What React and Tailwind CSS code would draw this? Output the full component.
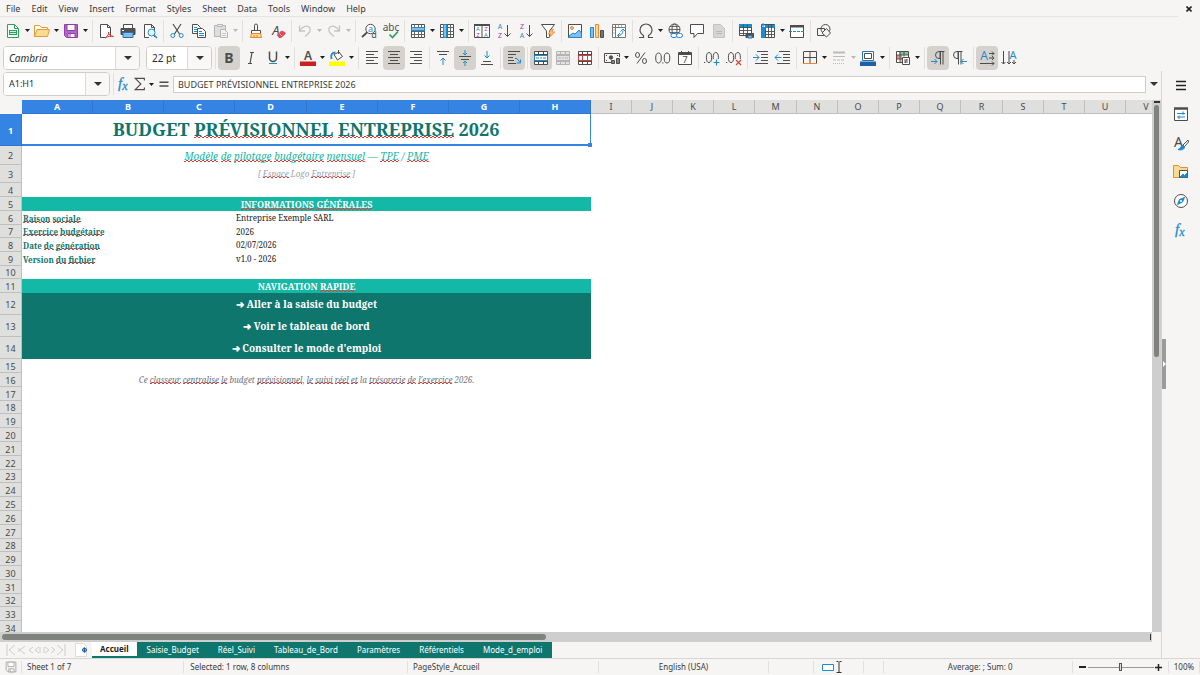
import React from "react";
import clsx from "clsx";

const menus = ["File", "Edit", "View", "Insert", "Format", "Styles", "Sheet", "Data", "Tools", "Window", "Help"];

const columns = [
  ["A", 71], ["B", 71], ["C", 71], ["D", 72], ["E", 71], ["F", 71], ["G", 71], ["H", 71],
  ["I", 41], ["J", 41], ["K", 41], ["L", 41], ["M", 42], ["N", 41], ["O", 41], ["P", 41],
  ["Q", 41], ["R", 42], ["S", 41], ["T", 41], ["U", 41], ["V", 41],
];

const rowHeights = [
  32, 19, 18, 14, 14, 14, 13, 14, 14, 13, 14, 22, 22, 22, 14, 14, 14, 13, 14,
  14, 14, 14, 13, 14, 14, 14, 14, 13, 14, 14, 14, 13, 14, 14,
];

const tabs = ["Saisie_Budget", "Réel_Suivi", "Tableau_de_Bord", "Paramètres", "Référentiels", "Mode_d_emploi"];

/* ---------- helpers ---------- */

const Svg = ({ children, className = "w-4 h-4" }) => (
  <svg viewBox="0 0 16 16" fill="none" stroke="#4d4d4d" strokeWidth="1" className={clsx("shrink-0 overflow-visible", className)} aria-hidden="true">
    {children}
  </svg>
);

const Glyph = ({ x = 8, y = 13, size = 14, fill = "#4d4d4d", children, ...rest }) => (
  <text x={x} y={y} fontSize={size} fill={fill} stroke="none" textAnchor="middle" fontFamily="Noto Sans, sans-serif" {...rest}>
    {children}
  </text>
);

const Tool = ({ label, active, children }) => (
  <button
    type="button"
    aria-label={label}
    className={clsx("flex h-6 w-[22px] shrink-0 items-center justify-center rounded", active && "bg-[#d5d1cd]")}
  >
    {children}
  </button>
);

const Caret = ({ label = "More", dim }) => (
  <button type="button" aria-label={label} className="flex h-6 w-[7px] shrink-0 items-center justify-center">
    <svg viewBox="0 0 5 3" className="h-[3px] w-[5px]" aria-hidden="true">
      <path d="M0 0h5L2.500 3z" fill={dim ? "#b9b9b9" : "#1f1f1f"} />
    </svg>
  </button>
);

const Sep = ({ wide }) => (
  <span className={clsx("flex h-[22px] shrink-0 justify-center", wide ? "w-1.5" : "w-[5px]")}>
    <span className="w-px bg-[#e2e0de]" />
  </span>
);

const Combo = ({ label, value, className, inputClass = "text-[9px]" }) => (
  <div className={clsx("flex h-6 shrink-0 overflow-hidden rounded border border-[#d0ccc8] bg-white", className)}>
    <input aria-label={label} defaultValue={value} className={clsx("min-w-0 flex-1 bg-white pl-[5px] text-[#2b2b2b] outline-none", inputClass)} />
    <button type="button" aria-label={`${label} list`} className="flex w-6 shrink-0 items-center justify-center border-l border-[#dcd9d6] bg-[#f9f8f7]">
      <svg viewBox="0 0 8 4" className="h-1 w-2" aria-hidden="true">
        <path d="M0 0h8L4 4z" fill="#2e3436" />
      </svg>
    </button>
  </div>
);

/* Words flagged by the spell checker */
const Sp = ({ big, children }) => (
  <span
    className={clsx(
      "bg-[linear-gradient(90deg,#e0403a_2px,transparent_2px),linear-gradient(90deg,#e0403a_2px,transparent_2px)] [background-repeat:repeat-x] [background-size:4px_1px]",
      big
        ? "[background-position:0_calc(100%-3px),2px_calc(100%-4px)]"
        : "[background-position:0_calc(100%-1px),2px_calc(100%-2px)]"
    )}
  >
    {children}
  </span>
);

/* ---------- icons ---------- */

const blue = "#1e8bcd";
const light = "#83beec";

const NewIcon = () => (
  <Svg>
    <path d="M2.500 1.500h7l4 4v9h-11z" fill="#fff" stroke="#2aa05a" />
    <path d="M9.500 1.500v4h4" stroke="#2aa05a" />
    <path d="M4 7h8v5H4z" fill="#2aa05a" stroke="none" />
    <path d="M5 8.500h6M5 10.500h6" stroke="#d4f0dd" />
  </Svg>
);
const OpenIcon = () => (
  <Svg>
    <path d="M.5 13.500v-11h5l2 2h6v2" fill="#fff" stroke="#e69b3a" />
    <path d="M.5 13.500l2.500-7h12.500l-2 7z" fill="#f8db8f" stroke="#e69b3a" />
  </Svg>
);
const SaveIcon = ({ dim }) => (
  <Svg className={dim ? "h-3 w-3" : "h-4 w-4"}>
    <path d="M1.500 1.500h13v13h-11l-2-2z" fill={dim ? "#f5f4f2" : "#b565c8"} stroke={dim ? "#999" : "#8f3fa6"} />
    <path d="M4 1.500h8v6H4z" fill="#fff" stroke={dim ? "#999" : "#8f3fa6"} />
    <path d="M5 10.500h7v4H5z" fill="#fff" stroke={dim ? "#999" : "#8f3fa6"} />
    <path d="M7 11v3" stroke={dim ? "#999" : "#8f3fa6"} />
  </Svg>
);
const PdfIcon = () => (
  <Svg>
    <path d="M8 14.500H2.500v-13h7l3 3V14" fill="#fff" />
    <path d="M9.500 1.500v3h3" />
    <path d="M7 15c3-2 4-4 3.500-6 0 3 2 4 5 4.500-3-1-6 0-8.500 1.500z" stroke="#dd3b3b" />
  </Svg>
);
const PrintIcon = () => (
  <Svg>
    <path d="M3.500 5V1.500h9V5" fill="#fff" />
    <path d="M1 5.500h14v6H1z" fill="#4d5357" />
    <path d="M3 9.500h10v5H3z" fill={light} stroke="#2a74ae" />
    <path d="M2 7.500h2" stroke="#fff" />
  </Svg>
);
const PreviewIcon = () => (
  <Svg>
    <path d="M7 14.500H2.500v-13h7l3 3V14" fill="#fff" />
    <path d="M9.500 1.500v3h3" />
    <circle cx="9.500" cy="9.500" r="3.500" fill="#e7f3fb" stroke={blue} />
    <path d="M12 12l3 3" stroke={blue} strokeWidth="1.500" />
  </Svg>
);
const CutIcon = () => (
  <Svg>
    <path d="M4 1l6.500 10M12 1L5.500 11" strokeWidth="1.200" />
    <circle cx="3.800" cy="12.500" r="2" stroke={blue} />
    <circle cx="12.200" cy="12.500" r="2" stroke={blue} />
  </Svg>
);
const CopyIcon = () => (
  <Svg>
    <path d="M1.500 1.500h5l3 3v6h-8z" fill="#fff" />
    <path d="M3 4.500h3M3 6.500h4M3 8.500h3" stroke={blue} />
    <path d="M6.500 5.500h5l3 3v6h-8z" fill="#fff" />
    <path d="M8 8.500h3M8 10.500h5M8 12.500h5" stroke={blue} />
  </Svg>
);
const PasteIcon = () => (
  <Svg>
    <path d="M1.500 2.500h11v11h-11z" fill="#dedede" stroke="#b5b5b5" />
    <path d="M4.500 1.500h5v2h-5z" fill="#eee" stroke="#b5b5b5" />
    <path d="M7.500 6.500h4l3 3v5h-7z" fill="#f2f2f2" stroke="#b5b5b5" />
    <path d="M9 10.500h4M9 12.500h4" stroke="#c8c8c8" />
  </Svg>
);
const BrushIcon = () => (
  <Svg>
    <path d="M6.500 7.500v-5a1.500 1.500 0 013 0v5" />
    <path d="M3.500 7.500h9v3h-9z" fill="#fff" />
    <path d="M3.500 10.500l-1 4h11l-1-4z" fill="#f8db8f" stroke="#ed8733" />
    <path d="M6 14v-2M9 14v-2" stroke="#ed8733" />
  </Svg>
);
const ClearIcon = () => (
  <Svg>
    <Glyph x={6} y={12} size={13} fontStyle="italic">A</Glyph>
    <path d="M7.500 12l4-4 3.500 1.500v1.500L11 14.500H9z" fill="#e04b57" stroke="#e04b57" strokeLinejoin="round" />
    <path d="M9.500 10.500l3 3" stroke="#f9b5b9" />
  </Svg>
);
const UndoIcon = ({ flip }) => (
  <Svg>
    <g transform={flip ? "matrix(-1 0 0 1 16 0)" : undefined} stroke="#c4c4c4">
      <path d="M2.500 2.500v5.500h5.500M2.500 8c3-5 8-6 10-3.500S13 10 8 13.500" strokeWidth="1.300" />
    </g>
  </Svg>
);
const FindIcon = () => (
  <Svg>
    <circle cx="9.500" cy="6" r="4.700" fill="#fff" />
    <path d="M6 9.500L1 14" strokeWidth="1.800" />
    <Glyph x={9.500} y={9} size={9} fill={blue}>a</Glyph>
    <Glyph x={13} y={15} size={9}>d</Glyph>
  </Svg>
);
const SpellIcon = () => (
  <Svg>
    <Glyph x={8} y={8} size={10}>abc</Glyph>
    <path d="M6.500 11.500l3 3 5.500-6" stroke="#23a15a" strokeWidth="1.600" />
  </Svg>
);
const GridIcon = ({ mode }) => (
  <Svg>
    <path d="M1.500 1.500h13v13h-13z" fill="#fff" />
    <path d="M1.500 4.500h13M1.500 8.500h13M1.500 11.500h13M4.500 1.500v13M8.500 1.500v13M11.500 1.500v13" stroke="#666" />
    {mode === "row" ? <path d="M1.500 4.500h13v3h-13z" fill={light} stroke={blue} /> : <path d="M4.500 1.500h3v13h-3z" fill={light} stroke={blue} />}
  </Svg>
);
const SortIcon = () => (
  <Svg>
    <path d="M.5 1.500h15v13H.5zM8 3v12" fill="#fff" />
    <path d="M0 2h16" strokeWidth="2" />
    <Glyph x={4} y={8} size={6} fill={blue}>A</Glyph>
    <Glyph x={4} y={14} size={6} fill="#a03ab3">Z</Glyph>
    <Glyph x={12} y={8} size={6} fill="#a03ab3">Z</Glyph>
    <Glyph x={12} y={14} size={6} fill={blue}>A</Glyph>
  </Svg>
);
const SortDirIcon = ({ top, bottom }) => (
  <Svg>
    <Glyph x={4} y={6} size={7} fill={top === "A" ? blue : "#a03ab3"}>{top}</Glyph>
    <Glyph x={4} y={15} size={7} fill={top === "A" ? "#a03ab3" : blue}>{bottom}</Glyph>
    <path d="M11.500 2v11.500M8.500 10.500l3 3 3-3" />
  </Svg>
);
const FilterIcon = () => (
  <Svg>
    <path d="M1.500 1.500h13L9.500 8v6.500h-3V8z" fill="#fff" />
    <path d="M12 6L8 11h3l-2 4 6-6h-3l1.500-3z" fill="#f8c67a" stroke="#ed8733" strokeWidth=".7" />
  </Svg>
);
const ImageIcon = () => (
  <Svg>
    <path d="M1.500 1.500h13v13h-13z" fill="#fff" />
    <circle cx="5" cy="5" r="1.500" fill="#f8c67a" stroke="#ed8733" />
    <path d="M2 13l4-3 2 1 4-4 2.500 3v4.500H2z" fill={light} stroke={blue} />
  </Svg>
);
const ChartIcon = () => (
  <Svg>
    <path d="M1.500 4.500h3v10h-3z" fill={light} stroke={blue} />
    <path d="M6.500 1.500h3v13h-3z" fill="#f8db8f" stroke="#ed8733" />
    <path d="M11.500 7.500h3v7h-3z" fill="#777" />
  </Svg>
);
const PivotIcon = () => (
  <Svg>
    <path d="M1.500 1.500h13v13h-13zM1.500 4.500h13M4.500 1.500v13" fill="#fff" stroke="#777" />
    <path d="M7 12.500c3 0 5-2 5-5M9.500 8.500L12 6l2.500 2.500M9 10l-2.500 2.500L9 15" stroke={blue} />
    <path d="M2.500 7h1M2.500 10h1M7 3h1M10 3h1" stroke="#777" />
  </Svg>
);
const OmegaIcon = () => (
  <Svg>
    <path d="M1 14.500h4.500v-2C3 11 2 9.500 2 7a6 6 0 0112 0c0 2.500-1 4-3.500 5.500v2H15" strokeWidth="1.200" />
  </Svg>
);
const LinkIcon = () => (
  <Svg>
    <circle cx="7.500" cy="6.500" r="5.500" />
    <ellipse cx="7.500" cy="6.500" rx="2.500" ry="5.500" />
    <path d="M2 6.500h11M3 3.500h9M3 9.500h9" strokeWidth=".8" />
    <rect x="4" y="10.500" width="6" height="4" rx="2" fill="#fff" stroke={blue} />
    <rect x="9.500" y="10.500" width="6" height="4" rx="2" fill="#fff" stroke={blue} />
  </Svg>
);
const CommentIcon = () => (
  <Svg>
    <path d="M1.500 1.500h13v9h-6l-3.500 4v-4H1.500z" fill="#fff" />
  </Svg>
);
const HeaderFooterIcon = () => (
  <Svg>
    <path d="M2.500 1.500h7l4 4v9h-11z" fill="#d6d6d6" stroke="#c2c2c2" />
    <path d="M5 8.500h6M5 10.500h6" stroke="#b8b8b8" />
  </Svg>
);
const PrintAreaIcon = () => (
  <Svg>
    <path d="M1.500 1.500h12v11h-12z" fill="#fff" />
    <path d="M1 1h13v4H1z" fill={blue} stroke="none" />
    <path d="M1.500 4.500h12M1.500 7.500h12M1.500 10.500h12M5.500 1.500v11M9.500 1.500v11" strokeWidth=".9" />
    <path d="M8 10.500h7.500v4H8z" fill="#4d5357" />
    <path d="M10 12.500h4v2.500h-4z" fill={light} stroke="#2a74ae" />
  </Svg>
);
const FreezeIcon = () => (
  <Svg>
    <path d="M1.500 1.500h13v13h-13z" fill="#fff" />
    <path d="M1 4h4.500v11H1zM5 4V2h10v3H5z" fill={blue} stroke="none" />
    <path d="M5.500 5v9.500M8.500 2v12.500M11.500 2v12.500M5 8.500h10M5 11.500h10" strokeWidth=".9" />
    <path d="M3 0v4M1 2h4" stroke={blue} />
  </Svg>
);
const SplitIcon = () => (
  <Svg>
    <path d="M1.500 2.500h13v12h-13z" fill="#fff" />
    <path d="M1 2h14v2.500H1z" fill="#4d4d4d" stroke="none" />
    <path d="M0 8.500h16" stroke={blue} strokeDasharray="3 1" />
  </Svg>
);
const ShapesIcon = () => (
  <Svg>
    <circle cx="9.500" cy="6" r="4.500" />
    <path d="M1.500 5.500h7v7h-7z" />
    <path d="M10.500 5.500l4 4.500-4 4-4.500-4z" fill="#f5f4f2" />
  </Svg>
);
const ItalicIcon = () => (
  <Svg>
    <path d="M7 2.500h4M5 13.500h4M9 2.500l-2 11" strokeWidth="1.200" />
  </Svg>
);
const UnderlineIcon = () => (
  <Svg>
    <path d="M4.500 1.500V8a3.500 3.500 0 007 0V1.500" strokeWidth="1.500" />
    <path d="M4 13.500h8" stroke={blue} />
  </Svg>
);
const FontColor = () => (
  <Svg>
    <Glyph x={8} y={10} size={12} fontWeight="600">A</Glyph>
    <path d="M0 11.500h16V16H0z" fill="#c9211e" stroke="none" />
  </Svg>
);
const FillColor = () => (
  <Svg>
    <path d="M5 4.500l5-2.500 3.500 4.500-5 3.500z" fill="#fff" />
    <path d="M2.500 9C1.500 4.500 3 2.500 6.500 2.500" stroke={blue} strokeWidth="1.800" />
    <path d="M9.500 0v4" />
    <path d="M0 11.500h16V16H0z" fill="#ffff00" stroke="none" />
  </Svg>
);
const AlignIcon = ({ d }) => (
  <Svg>
    <path d={d} />
  </Svg>
);
const VAlign = ({ lines, arrow }) => (
  <Svg>
    <path d={lines} />
    <path d={arrow} stroke={blue} />
  </Svg>
);
const WrapIcon = () => (
  <Svg>
    <path d="M2 1.500h12M2 4.500h8M2 7.500h5M2 10.500h6M2 13.500h8" />
    <path d="M9 8.500h2l3 4M14.500 9.500v3.500h-4" stroke={blue} />
  </Svg>
);
const MergeIcon = ({ variant }) => {
  const c = variant === "dim" ? "#b4b4b4" : "#4d4d4d";
  const inner = variant === "red" ? "#dd3b3b" : variant === "dim" ? "#b4b4b4" : blue;
  return (
    <Svg>
      <path d="M1.500 1.500h13v13h-13z" fill={variant === "dim" ? "#e3e3e3" : "#fff"} stroke={c} />
      <path d="M1.500 4.500h13M1.500 11.500h13M5.500 1.500v3M10.500 1.500v3M5.500 11.500v3M10.500 11.500v3" stroke={c} />
      <path d="M1.500 5.500h13v5h-13z" stroke={inner} />
      {variant === "red" ? <path d="M5.500 5.500v5M10.500 5.500v5" stroke={inner} /> : <path d="M3 8h3M10 8h3M7 8h2" stroke={inner} />}
    </Svg>
  );
};
const CurrencyIcon = () => (
  <Svg>
    <path d="M9 12.500H.5v-9h15V7" />
    <path d="M2 5.500h1M13 5.500h1M2 10.500h1" />
    <circle cx="7" cy="7.500" r="1.700" fill="#4d4d4d" />
    <path d="M7.500 10.500h3v3h-3zM12.500 8.500h3v5h-3z" fill="#888" />
  </Svg>
);
const DateIcon = () => (
  <Svg>
    <path d="M1.500 2.500h13v12h-13z" fill="#fff" />
    <path d="M1 4h14" strokeWidth="2" />
    <path d="M4.500 1v3M11.500 1v3" />
    <Glyph x={8} y={13} size={9}>7</Glyph>
  </Svg>
);
const NumberIcon = () => (
  <Svg>
    <ellipse cx="3.500" cy="8" rx="2.800" ry="5" />
    <ellipse cx="12" cy="8" rx="2.800" ry="5" />
    <path d="M7.200 13h1.200" strokeWidth="1.200" />
  </Svg>
);
const DecimalIcon = ({ remove }) => (
  <Svg>
    <path d="M0 12.500h1.200" strokeWidth="1.200" />
    <ellipse cx="5" cy="7.500" rx="2.600" ry="5" />
    <ellipse cx="11.800" cy="7.500" rx="2.600" ry="5" />
    <path d="M9 9h7v7H9z" fill="#f6f5f4" stroke="none" />
    {remove ? <path d="M10 10l5 5M15 10l-5 5" stroke="#e0403a" strokeWidth="1.200" /> : <path d="M12.500 9.500v6M9.500 12.500h6" stroke={blue} strokeWidth="1.200" />}
  </Svg>
);
const PercentIcon = () => (
  <Svg>
    <path d="M12 2.500L4 13.500" />
    <ellipse cx="4.500" cy="5" rx="2" ry="2.500" />
    <ellipse cx="11.500" cy="11" rx="2" ry="2.500" />
  </Svg>
);
const IndentIcon = ({ out }) => (
  <Svg>
    <path d="M4 1.500h11M8 4.500h7M8 7.500h7M8 10.500h7M2 13.500h13" />
    <path d={out ? "M6.500 7.500H0M3 4.500l-3 3 3 3" : "M0 7.500h6M3 4.500l3 3-3 3"} stroke={blue} />
  </Svg>
);
const BorderIcon = () => (
  <Svg>
    <path d="M2 1.500h12.500v12M1.500 14V1.500M8 1.500v12M1.500 7.500h13" fill="none" />
    <path d="M1 13.500h14" stroke="#ed8733" />
  </Svg>
);
const LineStyleIcon = () => (
  <Svg>
    <path d="M2 2.500h12" strokeWidth="2" stroke="#bbb" />
    <path d="M2 6.500h12" stroke="#bbb" />
    <path d="M2 10h12" stroke="#bbb" strokeDasharray="3 1" />
    <path d="M2 13.500h12" stroke="#bbb" strokeDasharray="1 1" />
  </Svg>
);
const BorderColorIcon = () => (
  <Svg>
    <path d="M2.500 1.500h11v9h-11z" fill="#fff" stroke="#2a74ae" />
    <path d="M4.500 3.500h7v5h-7z" fill="#fff" />
    <path d="M0 11.500h16V16H0z" fill="#2060a4" stroke="none" />
  </Svg>
);
const ConditionalIcon = () => (
  <Svg>
    <path d="M1.500 1.500h12v11h-12z" fill="#fff" />
    <path d="M4 2h9v3H4z" fill="#7bcb91" stroke="none" />
    <path d="M2 5h5v4H2z" fill="#f08a80" stroke="none" />
    <path d="M5 9h3v3H5z" fill="#f8c67a" stroke="none" />
    <path d="M1.500 5h12M1.500 9h12M5 1.500v11M9 1.500v5" strokeWidth=".9" />
    <path d="M7.500 7.500h7v7h-7z" fill="#fff" />
    <path d="M9 10h4M9 12h4M12 9l-2 4" strokeWidth=".9" />
  </Svg>
);
const ParaIcon = ({ rtl }) => (
  <Svg>
    <g transform={rtl ? "translate(-4 0)" : undefined}>
      <path d="M14.500 1.500H9a3.500 3.500 0 000 7h1V1.500M10.500 2v12.500M13 2v12.500" />
    </g>
    <path d={rtl ? "M15 11.500H9M11.500 9L9 11.500l2.500 2.500" : "M1 11.500h6M4.500 9L7 11.500 4.500 14"} stroke={blue} />
  </Svg>
);
const TextDirIcon = ({ vertical }) => (
  <Svg>
    {vertical ? (
      <>
        <Glyph x={12} y={9} size={11} fill={blue}>A</Glyph>
        <path d="M2.500 1v13M.5 12l2 2 2-2M8 1v13M6 12l2 2 2-2M13 10v4M11 12l2 2 2-2" />
      </>
    ) : (
      <>
        <Glyph x={5} y={10} size={12} fill={blue}>A</Glyph>
        <path d="M10 3.500h5M13 1.500l2 2-2 2M10 8h5M13 6l2 2-2 2M1 13.500h14M13 11.500l2 2-2 2" />
      </>
    )}
  </Svg>
);
const FxIcon = () => (
  <Svg>
    <text x="2" y="12" fontSize="15" fontStyle="italic" fontFamily="Liberation Serif, serif" fill={blue} stroke={blue} strokeWidth=".3">
      f<tspan fontSize="12" dy="2">x</tspan>
    </text>
  </Svg>
);

/* ---------- side bar ---------- */

const SideBar = () => (
  <aside className="relative flex w-[39px] shrink-0 flex-col items-center gap-[13px] border-l border-[#d8d6d4] pt-[6px]">
    {/* Handle that hides the deck */}
    <button type="button" aria-label="Hide sidebar" className="absolute top-[268px] left-0 flex h-[50px] w-1 items-center justify-center bg-[#9a9c9a]">
      <svg viewBox="0 0 3 6" className="h-1.5 w-[3px]" aria-hidden="true">
        <path d="M0 0l3 3-3 3z" fill="#fff" />
      </svg>
    </button>
    <button type="button" aria-label="Sidebar settings">
      <Svg>
        <path d="M3 4.500h10M3 8.500h10M3 12.500h10" stroke="#222" strokeWidth="1.400" />
      </Svg>
    </button>
    <button type="button" aria-label="Properties">
      <Svg>
        <path d="M1.500 2.500h13v12h-13z" fill="#fff" />
        <path d="M1 2.500h14" strokeWidth="2.500" />
        <path d="M4 7.500h8M4 11h8M10 5.500v3.500M6 9.500V13" stroke={blue} />
      </Svg>
    </button>
    <button type="button" aria-label="Styles">
      <Svg>
        <Glyph x={5.500} y={12} size={14}>A</Glyph>
        <path d="M15 5l-5 5 1.500 1.500L15.500 7z" fill="#fff" />
        <path d="M10 10.500c-2 0-2 3-5 4 3 1 7 0 6.500-3z" fill={blue} stroke={blue} />
      </Svg>
    </button>
    <button type="button" aria-label="Gallery">
      <Svg>
        <path d="M.5 13.500v-12h5l2 2h7v10z" fill="#f8db8f" stroke="#ed8733" />
        <path d="M6.500 6.500h8v7h-8z" fill="#fff" />
        <path d="M7 13l3-3 1.500 1.500L14 9v4z" fill={blue} stroke={blue} />
      </Svg>
    </button>
    <button type="button" aria-label="Navigator">
      <Svg>
        <circle cx="8" cy="8" r="6.500" fill="#fff" />
        <path d="M11.500 4.500L9.500 9l-5 2.500 2-5z" fill={blue} stroke={blue} />
        <circle cx="8" cy="8" r="1" fill="#fff" stroke="none" />
      </Svg>
    </button>
    <button type="button" aria-label="Functions">
      <FxIcon />
    </button>
  </aside>
);

/* ---------- sheet ---------- */

const Label = ({ children }) => (
  <td colSpan={3} className="pl-px text-left align-bottom text-[8px] leading-[12px] font-bold text-[#0f766e]">
    {children}
  </td>
);
const Value = ({ children }) => (
  <td colSpan={5} className="pl-px text-left text-[8px] leading-[12px] text-[#1a1a1a]">
    {children}
  </td>
);
const Band = ({ children }) => (
  <td colSpan={8} className="bg-[#14b8a6] text-center text-[9px] leading-[13px] font-bold text-white">
    {children}
  </td>
);
const NavCell = ({ children }) => (
  <td colSpan={8} className="bg-[#0f766e] text-center text-[10px] leading-4 font-bold text-white">
    <a href="#nav">➜ {children}</a>
  </td>
);

const cells = {
  1: (
    <td colSpan={8} className="relative border-r border-b-2 border-[#3584e4] text-center text-[18px] leading-7 font-bold text-[#0f766e]">
      BUDGET <Sp big>PRÉVISIONNEL</Sp> <Sp big>ENTREPRISE</Sp> 2026
      <span className="absolute -right-0.5 -bottom-[3px] h-1 w-1 bg-[#3584e4]" />
    </td>
  ),
  2: (
    <td colSpan={8} className="text-center text-[10px] leading-4 text-[#14b8a6] italic">
      <Sp>Modèle</Sp> <Sp>de</Sp> <Sp>pilotage</Sp> <Sp>budgétaire</Sp> <Sp>mensuel</Sp> — <Sp>TPE</Sp> / <Sp>PME</Sp>
    </td>
  ),
  3: (
    <td colSpan={8} className="text-center text-[8px] leading-4 text-[#9ca3af] italic">
      [ <Sp>Espace</Sp> Logo <Sp>Entreprise</Sp> ]
    </td>
  ),
  5: <Band><Sp>INFORMATIONS</Sp> <Sp>GÉNÉRALES</Sp></Band>,
  6: <><Label><Sp>Raison</Sp> <Sp>sociale</Sp></Label><Value>Entreprise Exemple SARL</Value></>,
  7: <><Label><Sp>Exercice</Sp> <Sp>budgétaire</Sp></Label><Value>2026</Value></>,
  8: <><Label>Date <Sp>de</Sp> <Sp>génération</Sp></Label><Value>02/07/2026</Value></>,
  9: <><Label>Version <Sp>du</Sp> <Sp>fichier</Sp></Label><Value>v1.0 - 2026</Value></>,
  11: <Band>NAVIGATION <Sp>RAPIDE</Sp></Band>,
  12: <NavCell>Aller à la saisie du budget</NavCell>,
  13: <NavCell>Voir le tableau de bord</NavCell>,
  14: <NavCell>Consulter le mode d'emploi</NavCell>,
  16: (
    <td colSpan={8} className="text-center text-[8px] leading-[12px] text-[#6b7280] italic">
      Ce <Sp>classeur</Sp> <Sp>centralise</Sp> <Sp>le</Sp> budget <Sp>prévisionnel</Sp>, <Sp>le</Sp> <Sp>suivi</Sp> <Sp>réel</Sp> <Sp>et</Sp> la{" "}
      <Sp>trésorerie</Sp> <Sp>de</Sp> <Sp>l'exercice</Sp> 2026.
    </td>
  ),
};

const Sheet = () => (
  <div className="min-h-0 min-w-0 flex-1 overflow-hidden bg-white">
    <table className="w-[1167px] table-fixed border-separate border-spacing-0 font-['Noto_Serif','DejaVu_Serif',serif] [&_td]:py-0 [&_td]:pr-0">
      <colgroup>
        <col style={{ width: 22 }} />
        {columns.map(([name, width]) => (
          <col key={name} style={{ width }} />
        ))}
      </colgroup>
      <thead className="font-['Noto_Sans',sans-serif] text-[9px] leading-[12px]">
        <tr className="h-3.5">
          <th className="bg-[#f6f5f4] p-0" />
          {columns.map(([name], i) => (
            <th
              key={name}
              className={clsx(
                "border-r border-b p-0",
                i < 8 ? "border-[#2f77cf] bg-[#3584e4] font-bold text-white" : "border-[#c0bfbe] bg-[#dfdfde] font-normal text-[#4a4a4a]"
              )}
            >
              {name}
            </th>
          ))}
        </tr>
      </thead>
      <tbody>
        {rowHeights.map((height, i) => (
          <tr key={i} style={{ height }}>
            <th
              className={clsx(
                "border-r border-b px-0 pt-px pb-0 font-['Noto_Sans',sans-serif] text-[9px] leading-[11px]",
                i === 0 ? "border-[#2f77cf] bg-[#3584e4] font-bold text-white" : "border-[#c0bfbe] bg-[#dfdfde] font-normal text-[#4a4a4a]"
              )}
            >
              {i + 1}
            </th>
            {cells[i + 1] || <td colSpan={8} />}
            <td colSpan={14} />
          </tr>
        ))}
      </tbody>
    </table>
  </div>
);

const App = () => {
  return (
    <div className="flex h-screen flex-col overflow-hidden bg-[#f6f5f4] font-['Noto_Sans',sans-serif] text-[9px] leading-[12px] text-[#3a3a3a]">
      {/* Menu bar */}
      <nav className="flex h-[17px] shrink-0 items-center">
        <div className="flex h-full flex-1 items-center gap-[11px] border-b border-[#e6e4e2] pt-0.5 pl-1.5">
          {menus.map((item) => (
            <button key={item} type="button">{item}</button>
          ))}
        </div>
        <button type="button" aria-label="Close document" className="flex w-[22px] justify-center">
          <svg viewBox="0 0 6 6" className="h-1.5 w-1.5" aria-hidden="true">
            <path d="M.5.5l5 5M5.500.5l-5 5" stroke="#222" strokeWidth="1.600" />
          </svg>
        </button>
      </nav>

      {/* Standard toolbar */}
      <div className="flex h-[27px] shrink-0 items-center pl-0.5">
        <Tool label="New"><NewIcon /></Tool><Caret />
        <Tool label="Open"><OpenIcon /></Tool><Caret />
        <Tool label="Save"><SaveIcon /></Tool><Caret />
        <Sep wide />
        <Tool label="Export as PDF"><PdfIcon /></Tool>
        <Tool label="Print"><PrintIcon /></Tool>
        <Tool label="Print preview"><PreviewIcon /></Tool>
        <Sep />
        <Tool label="Cut"><CutIcon /></Tool>
        <Tool label="Copy"><CopyIcon /></Tool>
        <Tool label="Paste"><PasteIcon /></Tool><Caret dim />
        <Sep wide />
        <Tool label="Clone formatting"><BrushIcon /></Tool>
        <Tool label="Clear formatting"><ClearIcon /></Tool>
        <Sep />
        <Tool label="Undo"><UndoIcon /></Tool><Caret dim />
        <Tool label="Redo"><UndoIcon flip /></Tool><Caret dim />
        <Sep wide />
        <Tool label="Find and replace"><FindIcon /></Tool>
        <Tool label="Spelling"><SpellIcon /></Tool>
        <Sep />
        <Tool label="Row"><GridIcon mode="row" /></Tool><Caret />
        <Tool label="Column"><GridIcon mode="col" /></Tool><Caret />
        <Sep wide />
        <Tool label="Sort"><SortIcon /></Tool>
        <Tool label="Sort ascending"><SortDirIcon top="A" bottom="Z" /></Tool>
        <Tool label="Sort descending"><SortDirIcon top="Z" bottom="A" /></Tool>
        <Tool label="AutoFilter"><FilterIcon /></Tool>
        <Sep />
        <Tool label="Image"><ImageIcon /></Tool>
        <Tool label="Chart"><ChartIcon /></Tool>
        <Tool label="Pivot table"><PivotIcon /></Tool>
        <Sep />
        <Tool label="Special character"><OmegaIcon /></Tool><Caret />
        <Tool label="Hyperlink"><LinkIcon /></Tool>
        <Tool label="Comment"><CommentIcon /></Tool>
        <Tool label="Headers and footers"><HeaderFooterIcon /></Tool>
        <Sep />
        <Tool label="Print area"><PrintAreaIcon /></Tool>
        <Tool label="Freeze rows and columns"><FreezeIcon /></Tool><Caret />
        <Tool label="Split window"><SplitIcon /></Tool>
        <Sep />
        <Tool label="Draw functions"><ShapesIcon /></Tool>
      </div>

      {/* Formatting toolbar */}
      <div className="flex h-[27px] shrink-0 items-center pl-[3px]">
        <Combo label="Font name" value="Cambria" className="w-[137px]" inputClass="text-[10px] italic" />
        <Combo label="Font size" value="22 pt" className="ml-1.5 w-[66px]" inputClass="text-[10px]" />
        <Sep wide />
        <Tool label="Bold" active><Svg><Glyph y={13} size={14} fontWeight="bold">B</Glyph></Svg></Tool>
        <Tool label="Italic"><ItalicIcon /></Tool>
        <Tool label="Underline"><UnderlineIcon /></Tool><Caret />
        <Sep wide />
        <Tool label="Font color"><FontColor /></Tool><Caret />
        <Tool label="Background color"><FillColor /></Tool><Caret />
        <Sep wide />
        <Tool label="Align left"><AlignIcon d="M2 1.500h12M2 4.500h8M2 7.500h12M2 10.500h8M2 13.500h12" /></Tool>
        <Tool label="Align center" active><AlignIcon d="M2 1.500h12M4 4.500h8M2 7.500h12M4 10.500h8M2 13.500h12" /></Tool>
        <Tool label="Align right"><AlignIcon d="M2 1.500h12M6 4.500h8M2 7.500h12M6 10.500h8M2 13.500h12" /></Tool>
        <Sep />
        <Tool label="Align top"><VAlign lines="M2 1.500h12M4 4.500h8" arrow="M8 15V8M5.500 10.500L8 8l2.500 2.500" /></Tool>
        <Tool label="Center vertically" active><VAlign lines="M2 6.500h12M4 9.500h8" arrow="M8 0v5M6 3l2 2 2-2M8 16v-5M6 13l2-2 2 2" /></Tool>
        <Tool label="Align bottom"><VAlign lines="M2 14.500h12M4 11.500h8" arrow="M8 1v7M5.500 5.500L8 8l2.500-2.500" /></Tool>
        <Sep />
        <Tool label="Wrap text" active><WrapIcon /></Tool>
        <Sep />
        <Tool label="Merge and center" active><MergeIcon /></Tool>
        <Tool label="Merge cells"><MergeIcon variant="dim" /></Tool>
        <Tool label="Unmerge cells"><MergeIcon variant="red" /></Tool>
        <Sep />
        <Tool label="Currency"><CurrencyIcon /></Tool><Caret />
        <Tool label="Percent"><PercentIcon /></Tool>
        <Tool label="Number"><NumberIcon /></Tool>
        <Tool label="Date"><DateIcon /></Tool>
        <Sep />
        <Tool label="Add decimal place"><DecimalIcon /></Tool>
        <Tool label="Delete decimal place"><DecimalIcon remove /></Tool>
        <Sep />
        <Tool label="Increase indent"><IndentIcon /></Tool>
        <Tool label="Decrease indent"><IndentIcon out /></Tool>
        <Sep />
        <Tool label="Borders"><BorderIcon /></Tool><Caret />
        <Tool label="Border style"><LineStyleIcon /></Tool><Caret dim />
        <Tool label="Border color"><BorderColorIcon /></Tool><Caret />
        <Sep wide />
        <Tool label="Conditional formatting"><ConditionalIcon /></Tool><Caret />
        <Sep wide />
        <Tool label="Left to right" active><ParaIcon /></Tool>
        <Tool label="Right to left"><ParaIcon rtl /></Tool>
        <Sep />
        <Tool label="Text direction horizontal" active><TextDirIcon /></Tool>
        <Tool label="Text direction vertical"><TextDirIcon vertical /></Tool>
      </div>

      <div className="flex min-h-0 flex-1">
        <main className="flex min-w-0 flex-1 flex-col">
          {/* Formula bar */}
          <div className="flex h-[29px] shrink-0 items-center pb-[3px] pl-[3px]">
            <Combo label="Name box" value="A1:H1" className="w-[107px]" />
            <Sep wide />
            <button type="button" aria-label="Function wizard" className="flex w-4 justify-center"><FxIcon /></button>
            <button type="button" aria-label="Sum" className="flex w-4 justify-center">
              <Svg className="h-3.5 w-3.5"><path d="M13 4V1.500H2.500L9 8l-6.500 6.500H13V12" strokeWidth="1.300" /></Svg>
            </button>
            <Caret />
            <button type="button" aria-label="Formula" className="flex w-[18px] justify-center">
              <Svg className="h-3 w-3"><path d="M2 5.500h12M2 10.500h12" strokeWidth="2" /></Svg>
            </button>
            <input
              aria-label="Formula input"
              defaultValue="BUDGET PRÉVISIONNEL ENTREPRISE 2026"
              className="h-[17px] min-w-0 flex-1 border border-[#d0ccc8] bg-white pl-1 text-[9px] text-[#3a3a3a] outline-none"
            />
            <button type="button" aria-label="Expand formula bar" className="flex w-[15px] justify-center">
              <svg viewBox="0 0 8 4" className="h-1 w-2" aria-hidden="true">
                <path d="M0 0h8L4 4z" fill="#2e3436" />
              </svg>
            </button>
          </div>

          {/* Grid and vertical scroll bar */}
          <div className="flex min-h-0 flex-1">
            <Sheet />
            <div className="flex w-[9px] shrink-0 flex-col items-center bg-[#cecece] pt-px">
              <span className="h-0.5 w-1.5 bg-[#333]" />
              <span className="mt-0.5 h-[252px] w-[5px] rounded-full bg-[#808280]" />
            </div>
          </div>

          {/* Horizontal scroll bar */}
          <div className="mr-[9px] flex h-2.5 shrink-0 items-center justify-between bg-[#cecece] pr-px pl-0.5">
            <span className="h-1.5 w-[544px] rounded-full bg-[#808280]" />
            <span className="h-1.5 w-px bg-[#333]" />
          </div>

          {/* Sheet tabs */}
          <div className="flex h-4 shrink-0 items-stretch text-[8px]">
            <div className="flex w-[75px] items-center pl-1.5">
              <svg viewBox="0 0 60 12" className="h-3 w-[60px]" fill="none" stroke="#cfcdcb" aria-hidden="true">
                <path d="M1 0v12M9 1L3 6l6 5M19 2l-5 4 5 4M13 4v4M27 3l-4 3 4 3M33 3l-4 3 4 3M34 3v6M39 3l4 3-4 3M38 3v6M45 3l4 3-4 3M51 1l6 5-6 5M59 0v12" />
              </svg>
            </div>
            <button type="button" aria-label="Add sheet" className="flex w-[17px] items-center">
              <svg viewBox="0 0 14 14" className="h-3.5 w-3.5" aria-hidden="true">
                <path d="M.5.5h8l3 3v10H.5z" fill="#fff" stroke="#dcdcdc" />
                <circle cx="9.500" cy="7" r="2" fill="#fff" stroke="#2060a4" />
                <path d="M9.500 4.500v5M7 7h5" stroke="#2060a4" />
              </svg>
            </button>
            <button type="button" className="border-b-2 border-[#0f766e] bg-white px-2 font-bold text-[#222]">Accueil</button>
            <div className="flex gap-px bg-[#0f766e] px-px text-white">
              {tabs.map((tab) => (
                <button key={tab} type="button" className="px-[9px]">{tab}</button>
              ))}
            </div>
          </div>
        </main>
        <SideBar />
      </div>

      {/* Status bar */}
      <footer className="flex h-[17px] shrink-0 items-center border-t border-[#d8d6d4] text-[8px] [&>*]:h-3 [&>*]:border-r [&>*]:border-[#e2e0de]">
        <span className="flex w-[22px] shrink-0 items-center justify-center"><SaveIcon dim /></span>
        <span className="flex-[160_1_0px] pl-[5px]">Sheet 1 of 7</span>
        <span className="flex-[222_1_0px] pl-1.5">Selected: 1 row, 8 columns</span>
        <span className="flex-[189_1_0px] pl-[5px]">PageStyle_Accueil</span>
        <span className="flex-[174_1_0px] text-center">English (USA)</span>
        <span className="w-[45px] shrink-0" />
        <span className="flex w-[50px] shrink-0 items-center pl-2">
          <svg viewBox="0 0 20 12" className="h-3 w-5" fill="none" aria-hidden="true">
            <path d="M.5 3.500h11v6H.5z" stroke="#1e8bcd" fill="#fff" />
            <path d="M14.500.5h2m1 0h2M17 1v10M14.500 11.500h5" stroke="#333" />
          </svg>
        </span>
        <span className="w-5 shrink-0" />
        <span className="flex-[188_1_0px] pl-1 text-center">Average: ; Sum: 0</span>
        <span className="flex w-24 shrink-0 items-center justify-between px-1.5">
          <button type="button" aria-label="Zoom out" className="h-0.5 w-[7px] bg-[#222]" />
          <input
            type="range"
            aria-label="Zoom"
            defaultValue="50"
            className="h-px w-[66px] appearance-none bg-[#999] [&::-webkit-slider-thumb]:h-2 [&::-webkit-slider-thumb]:w-[3px] [&::-webkit-slider-thumb]:appearance-none [&::-webkit-slider-thumb]:border [&::-webkit-slider-thumb]:border-[#555] [&::-webkit-slider-thumb]:bg-[#ddd]"
          />
          <button type="button" aria-label="Zoom in">
            <svg viewBox="0 0 7 7" className="h-[7px] w-[7px]" aria-hidden="true">
              <path d="M3.500 0v7M0 3.500h7" stroke="#222" strokeWidth="1.500" />
            </svg>
          </button>
        </span>
        <span className="w-[31px] shrink-0 text-center">100%</span>
      </footer>
    </div>
  );
};

export default App;
